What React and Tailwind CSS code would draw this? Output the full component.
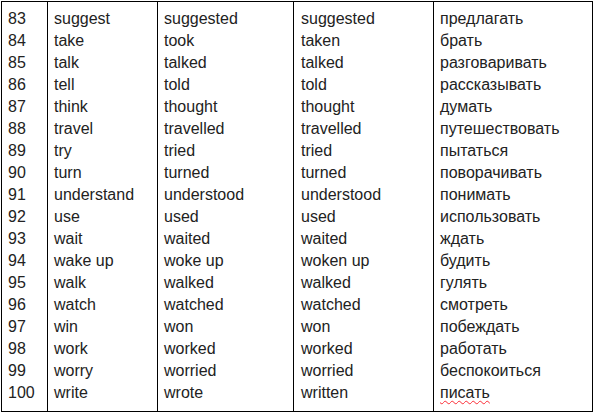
const rows = [
  ["83", "suggest", "suggested", "suggested", "предлагать"],
  ["84", "take", "took", "taken", "брать"],
  ["85", "talk", "talked", "talked", "разговаривать"],
  ["86", "tell", "told", "told", "рассказывать"],
  ["87", "think", "thought", "thought", "думать"],
  ["88", "travel", "travelled", "travelled", "путешествовать"],
  ["89", "try", "tried", "tried", "пытаться"],
  ["90", "turn", "turned", "turned", "поворачивать"],
  ["91", "understand", "understood", "understood", "понимать"],
  ["92", "use", "used", "used", "использовать"],
  ["93", "wait", "waited", "waited", "ждать"],
  ["94", "wake up", "woke up", "woken up", "будить"],
  ["95", "walk", "walked", "walked", "гулять"],
  ["96", "watch", "watched", "watched", "смотреть"],
  ["97", "win", "won", "won", "побеждать"],
  ["98", "work", "worked", "worked", "работать"],
  ["99", "worry", "worried", "worried", "беспокоиться"],
  ["100", "write", "wrote", "written", "писать"],
];

const cols = [
  { w: "w-[45px]", pad: "pl-[6px]", border: "" },
  { w: "w-[110px]", pad: "pl-[6px]", border: "border-l border-black" },
  { w: "w-[136px]", pad: "pl-[6px]", border: "border-l border-black" },
  { w: "w-[140px]", pad: "pl-[7px]", border: "border-l border-black" },
  { w: "w-[159px]", pad: "pl-[6px]", border: "border-l border-black" },
];

export default function App() {
  return (
    <div className="w-[597px] h-[416px] bg-white pt-[1px] pl-[1px]" style={{ fontFamily: '"Liberation Sans", Arial, sans-serif' }}>
      <div className="flex w-[592px] border border-black text-[16px] leading-[22px] text-[#222222]">
        {cols.map((c, ci) => (
          <div key={ci} className={`${c.w} ${c.pad} ${c.border} pt-[6px] pb-[7px] shrink-0`}>
            {rows.map((r, ri) => (
              <div key={ri} className="h-[22px] whitespace-nowrap">
                {ci === 4 && ri === 17 ? (
                  <span className="underline decoration-wavy decoration-red-500 decoration-[1px] underline-offset-[2px]">{r[ci]}</span>
                ) : (
                  r[ci]
                )}
              </div>
            ))}
          </div>
        ))}
      </div>
    </div>
  );
}
